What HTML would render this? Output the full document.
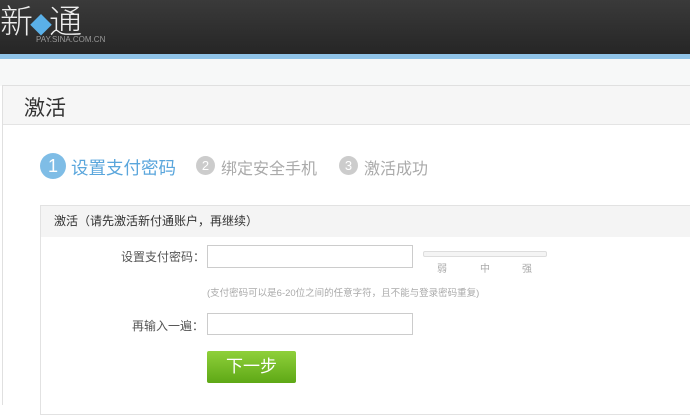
<!DOCTYPE html><html><head><meta charset="utf-8"><style>
*{margin:0;padding:0;box-sizing:border-box}
body{width:690px;height:404px;overflow:hidden;background:#fff;font-family:"Liberation Sans","Noto Sans CJK SC",sans-serif;position:relative}
.a{position:absolute}
</style></head><body>
<div class="a" style="left:0;top:0;width:690px;height:54px;background:linear-gradient(#3a3a3a,#262626)"></div>
<div class="a" style="left:0;top:4px;font-size:33px;color:#eee;font-weight:300;letter-spacing:-3px;line-height:36px">新<span style="color:#5ab0e8;font-size:22px">◆</span>通</div>
<div class="a" style="left:36px;top:35px;font-size:8px;color:#999">PAY.SINA.COM.CN</div>
<div class="a" style="left:0;top:54px;width:690px;height:5px;background:#8fc3e8"></div>
<div class="a" style="left:0;top:59px;width:690px;height:27px;background:#f7f8f8"></div>
<div class="a" style="left:2px;top:85px;width:690px;height:320px;border-left:1px solid #e0e0e0;border-top:1px solid #e0e0e0"></div>
<div class="a" style="left:3px;top:86px;width:690px;height:39px;background:#f6f6f6;border-bottom:1px solid #e4e4e4"></div>
<div class="a" style="left:24px;top:92px;font-size:21px;color:#333">激活</div>
<div class="a" style="left:40px;top:153px;width:26px;height:26px;border-radius:50%;background:#7fbde6;color:#fff;font-size:18px;text-align:center;line-height:26px">1</div>
<div class="a" style="left:71px;top:155px;font-size:17.5px;color:#5aa6dc">设置支付密码</div>
<div class="a" style="left:196px;top:156px;width:19px;height:19px;border-radius:50%;background:#ccc;color:#fff;font-size:13px;text-align:center;line-height:19px">2</div>
<div class="a" style="left:221px;top:155px;font-size:16px;color:#aaa">绑定安全手机</div>
<div class="a" style="left:339px;top:156px;width:19px;height:19px;border-radius:50%;background:#ccc;color:#fff;font-size:13px;text-align:center;line-height:19px">3</div>
<div class="a" style="left:364px;top:155px;font-size:16px;color:#aaa">激活成功</div>
<div class="a" style="left:40px;top:205px;width:660px;height:210px;border:1px solid #e2e2e2"></div>
<div class="a" style="left:41px;top:206px;width:650px;height:31px;background:#f4f4f4"></div>
<div class="a" style="left:54px;top:212px;font-size:12px;color:#333">激活（请先激活新付通账户，再继续）</div>
<div class="a" style="left:121px;top:248px;font-size:12px;color:#555">设置支付密码：</div>
<div class="a" style="left:207px;top:245px;width:206px;height:23px;border:1px solid #ccc"></div>
<div class="a" style="left:423px;top:251px;width:124px;height:6px;border:1px solid #ddd;background:#f4f4f4;border-radius:2px"></div>
<div class="a" style="left:437px;top:260px;font-size:10px;color:#aaa">弱</div>
<div class="a" style="left:480px;top:260px;font-size:10px;color:#aaa">中</div>
<div class="a" style="left:522px;top:260px;font-size:10px;color:#aaa">强</div>
<div class="a" style="left:207px;top:285px;font-size:9.5px;color:#aaa">(支付密码可以是6-20位之间的任意字符，且不能与登录密码重复)</div>
<div class="a" style="left:132px;top:317px;font-size:12px;color:#555">再输入一遍：</div>
<div class="a" style="left:207px;top:313px;width:206px;height:22px;border:1px solid #ccc"></div>
<div class="a" style="left:207px;top:351px;width:89px;height:32px;border-radius:2px;background:linear-gradient(#8fd03a,#5ea816);color:#fff;font-size:17px;text-align:center;line-height:32px">下一步</div>
</body></html>
